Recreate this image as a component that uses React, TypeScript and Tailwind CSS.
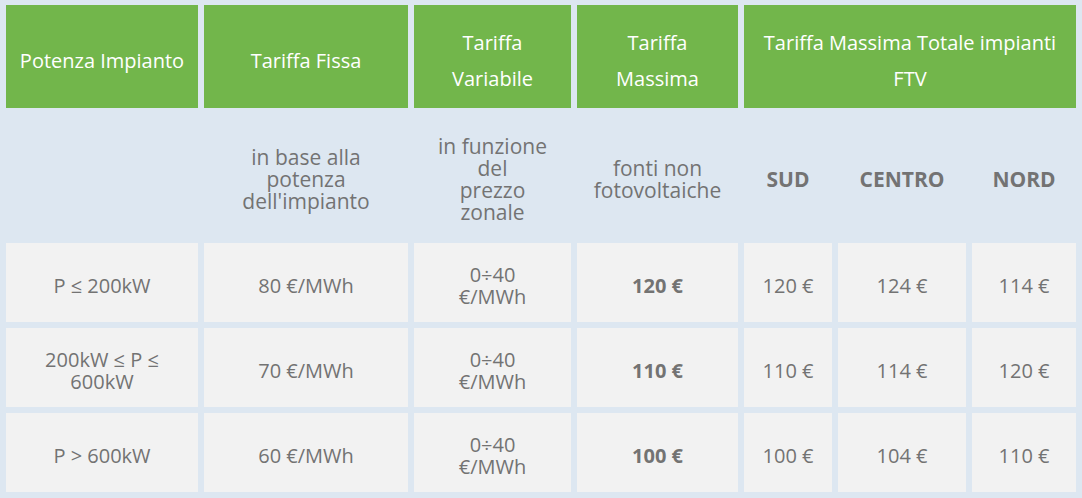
import React from "react";

const font = { fontFamily: '"Open Sans", "Noto Sans", sans-serif' };

type Row = {
  potenza: React.ReactNode;
  fissa: string;
  massima: string;
  sud: string;
  centro: string;
  nord: string;
};

const rows: Row[] = [
  { potenza: "P ≤ 200kW", fissa: "80 €/MWh", massima: "120 €", sud: "120 €", centro: "124 €", nord: "114 €" },
  {
    potenza: (
      <>
        200kW ≤ P ≤<br />
        600kW
      </>
    ),
    fissa: "70 €/MWh",
    massima: "110 €",
    sud: "110 €",
    centro: "114 €",
    nord: "120 €",
  },
  { potenza: "P > 600kW", fissa: "60 €/MWh", massima: "100 €", sud: "100 €", centro: "104 €", nord: "110 €" },
];

function Head({ children, className = "" }: { children: React.ReactNode; className?: string }) {
  return (
    <div
      className={`flex items-center justify-center bg-[#72b64b] px-2 pt-[9px] text-center text-[20px] leading-[36px] text-white ${className}`}
    >
      <div>{children}</div>
    </div>
  );
}

function Sub({ children, bold = false }: { children?: React.ReactNode; bold?: boolean }) {
  return (
    <div
      className={`flex items-center justify-center pt-[7px] text-center text-[21px] leading-[22px] text-[#737373] ${
        bold ? "font-bold" : ""
      }`}
    >
      <div>{children}</div>
    </div>
  );
}

function Cell({ children, bold = false }: { children: React.ReactNode; bold?: boolean }) {
  return (
    <div
      className={`flex items-center justify-center bg-[#f2f2f2] pt-[7px] text-center text-[20px] leading-[22px] text-[#737373] ${
        bold ? "font-bold" : ""
      }`}
    >
      <div>{children}</div>
    </div>
  );
}

export default function App() {
  return (
    <div className="min-h-[498px] w-[1082px] bg-[#dde7f1]" style={font}>
      <div className="grid grid-cols-[192px_204px_157px_161px_88px_128px_104px] grid-rows-[103px_123px_79px_79px_79px] gap-[6px] px-[6px] pt-[5px] pb-[6px]">
        {/* Header */}
        <Head>Potenza Impianto</Head>
        <Head>Tariffa Fissa</Head>
        <Head>
          Tariffa
          <br />
          Variabile
        </Head>
        <Head>
          Tariffa
          <br />
          Massima
        </Head>
        <Head className="col-span-3">
          Tariffa Massima Totale impianti
          <br />
          FTV
        </Head>

        {/* Sub header */}
        <Sub />
        <Sub>
          in base alla
          <br />
          potenza
          <br />
          dell'impianto
        </Sub>
        <Sub>
          in funzione
          <br />
          del
          <br />
          prezzo
          <br />
          zonale
        </Sub>
        <Sub>
          fonti non
          <br />
          fotovoltaiche
        </Sub>
        <Sub bold>SUD</Sub>
        <Sub bold>CENTRO</Sub>
        <Sub bold>NORD</Sub>

        {/* Rows */}
        {rows.map((r, i) => (
          <React.Fragment key={i}>
            <Cell>{r.potenza}</Cell>
            <Cell>{r.fissa}</Cell>
            <Cell>
              0÷40
              <br />
              €/MWh
            </Cell>
            <Cell bold>{r.massima}</Cell>
            <Cell>{r.sud}</Cell>
            <Cell>{r.centro}</Cell>
            <Cell>{r.nord}</Cell>
          </React.Fragment>
        ))}
      </div>
    </div>
  );
}
